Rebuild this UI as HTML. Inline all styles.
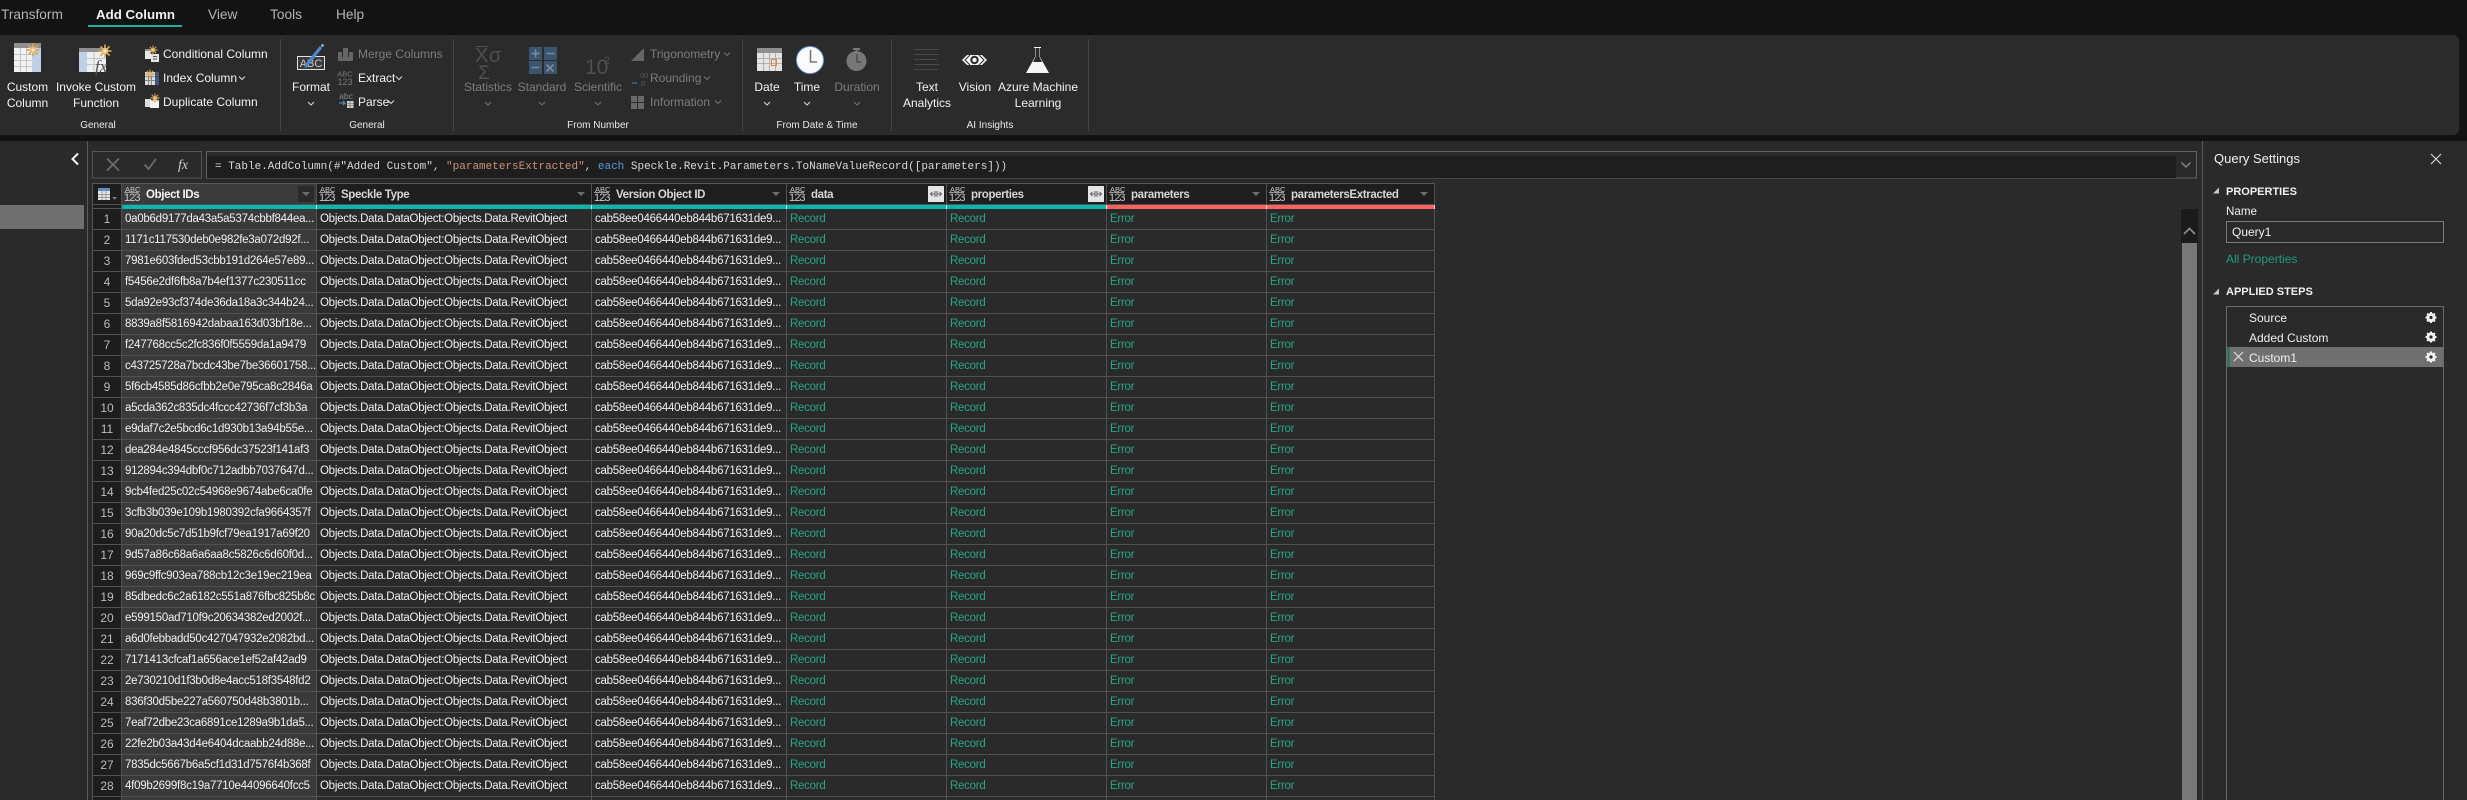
<!DOCTYPE html>
<html><head><meta charset="utf-8"><title>Power Query Editor</title>
<style>
html,body{margin:0;padding:0;width:2467px;height:800px;overflow:hidden;background:#131313;font-family:"Liberation Sans",sans-serif}
#w{position:absolute;left:0;top:0;width:2467px;height:800px;overflow:hidden;contain:strict;background:#131313}
#main{position:absolute;left:0;top:141px;width:2467px;height:659px;background:#2a2a2a;overflow:hidden}
.a{position:absolute}
svg{position:absolute;left:0;top:0;overflow:visible}
svg text{font-family:"Liberation Sans",sans-serif;font-size:12px;fill:#f2f2f2}
.tab{font-size:13.7px;fill:#b4b4b4}
.d{fill:#7c7c7c}
.g{font-size:10px;fill:#e8e8e8}
.m{text-anchor:middle}
.ch{fill:none;stroke:#d8d8d8;stroke-width:1.1}
.cd{fill:none;stroke:#707070;stroke-width:1.1}
#tb{position:absolute;left:93px;top:209px;border-collapse:separate;border-spacing:0;table-layout:fixed;width:1342px}
#tb td,#tb th{height:19px;padding:1px 0 0 3px;box-sizing:content-box;border-right:1px solid #515151;border-bottom:1px solid #515151;font-size:11.5px;letter-spacing:-.26px;font-weight:400;color:#f0f0f0;white-space:nowrap;overflow:hidden;text-align:left;line-height:19px;background:#2a2a2a}
#tb th{background:#1d1d1d;color:#bcbcbc;font-size:12px;letter-spacing:0;text-align:center;padding:1px 0 0}
#tb td:nth-child(2){background:#3a3a3a}
#tb td:nth-child(n+5){color:#28a587}
.h{position:absolute;top:184px;height:20px;background:#1e1e1e;border-right:1px solid #515151;box-sizing:border-box;font-size:11.5px;letter-spacing:-.36px;font-weight:700;color:#d6d6d6;line-height:20px;white-space:nowrap}
.h span{position:absolute;left:24px;top:1px}
.ic{position:absolute;left:2px;top:0;width:16px;height:20px;color:#c8c8c8}
.ic i{position:absolute;left:1px;top:2px;font:normal 7.5px/8px "Liberation Sans",sans-serif;letter-spacing:0}
.ic u{position:absolute;left:0;top:8px;width:15px;height:1px;background:#999}
.ic b{position:absolute;left:0;top:9px;font:normal 11px/11px "Liberation Sans",sans-serif;letter-spacing:-.9px}
.ar{position:absolute;top:8px;width:0;height:0;border-left:4px solid transparent;border-right:4px solid transparent;border-top:4.5px solid #6c6c6c}
.ex{position:absolute;top:2px;width:16px;height:16px;background:#e6e6e6}
.bar{position:absolute;top:205px;height:4px}
.tick{position:absolute;top:205px;width:1px;height:4px;background:#e0e0e0}
.q{position:absolute;white-space:nowrap;color:#f0f0f0;line-height:16px}
</style></head><body>
<div id="w">
<svg width="2467" height="135">
<defs>
<g id="st"><path d="M0-6.5V6.5M-6.5 0H6.5M-4.6-4.6 4.6 4.6M-4.6 4.6 4.6-4.6" stroke="#d5a55a" stroke-width="1.7"/><circle r="3.2" fill="#e6c27d"/><circle r="1.4" fill="#f6eedd"/></g>
<g id="sts"><path d="M0-4.5V4.5M-4.5 0H4.5M-3.2-3.2 3.2 3.2M-3.2 3.2 3.2-3.2" stroke="#c89c58" stroke-width="1.2"/><circle r="1.8" fill="#e6c27d"/></g>
</defs>
<rect x="-10" y="35" width="2469" height="100" rx="6" fill="#2b2b2b"/>

<text class="tab" x="1" y="19">Transform</text>
<text class="tab" x="96" y="19" style="font-weight:700;fill:#f0f0f0;font-size:13.3px">Add Column</text>
<rect x="88" y="25" width="94" height="2" fill="#1fae96"/>
<text class="tab" x="208" y="19">View</text>
<text class="tab" x="270" y="19">Tools</text>
<text class="tab" x="336" y="19">Help</text>

<!-- dividers -->
<path d="M280.5 39V131M453.5 39V131M742.5 39V131M891.5 39V131M1088.5 39V131" stroke="#454545"/>

<!-- Custom column -->
<rect x="14" y="43" width="27" height="29" fill="#f2f2f2"/>
<rect x="14" y="43" width="27" height="5" fill="#8f8f8f"/>
<rect x="32" y="48" width="9" height="24" fill="#bcd1e8"/>
<path d="M14 54.5H32M14 60.5H32M14 66.5H32M20.5 48V72M26.5 48V72" stroke="#c4c4c4"/>
<use href="#st" x="33" y="50"/>
<text class="m" x="27.5" y="91">Custom</text><text class="m" x="27.5" y="107">Column</text>

<!-- Invoke custom -->
<rect x="79" y="48" width="27" height="24" fill="#efefef"/>
<rect x="79" y="48" width="27" height="4" fill="#8f8f8f"/>
<rect x="79" y="52" width="8" height="20" fill="#bcd1e8"/>
<path d="M87 58.5H106M87 64.5H106M94 52V72" stroke="#c4c4c4"/>
<use href="#st" x="105" y="51"/>
<text x="95" y="72" style="font:italic 17px 'Liberation Serif',serif;fill:#4c4c4c">fx</text>
<text class="m" x="96" y="91">Invoke Custom</text><text class="m" x="96" y="107">Function</text>

<!-- small left icons -->
<rect x="145" y="49" width="6" height="10" fill="#e8e8e8"/><rect x="145" y="49" width="6" height="2" fill="#8f8f8f"/>
<rect x="151" y="54" width="8" height="8" fill="#e4e4e4"/><path d="M153 56.5H157M153 59H157" stroke="#555"/>
<use href="#sts" x="153" y="50"/>
<text x="163" y="58">Conditional Column</text>

<rect x="145" y="72" width="10" height="13" fill="#dcdcdc"/><path d="M145 76.5H155M145 80.5H155M148.5 72V85M151.5 72V85" stroke="#888"/>
<rect x="155" y="72" width="4" height="13" fill="#3e5876"/>
<use href="#sts" x="150" y="74"/>
<text x="163" y="82">Index Column</text><path class="ch" d="M239 76.5l3 3 3-3"/>

<rect x="145" y="99" width="6" height="8" fill="#dcdcdc"/><rect x="150" y="100" width="9" height="8" fill="#f4f4f4"/>
<use href="#sts" x="155" y="98"/>
<text x="163" y="106">Duplicate Column</text>

<text class="g m" x="98" y="128">General</text>

<!-- Format -->
<rect x="297.5" y="56.5" width="27" height="13" fill="#3b3b3b" stroke="#e2e2e2"/>
<text class="m" x="311" y="67" style="font-size:11px;fill:#c8c8c8">ABC</text>
<path d="M305 67 321 47" stroke="#4a86c8" stroke-width="3.2"/><path d="M321.5 46.5 323.5 44.5" stroke="#7fb0e0" stroke-width="2.5"/>
<text class="m" x="311" y="91">Format</text><path class="ch" d="M308 102l3 3 3-3"/>

<!-- Merge -->
<path d="M338 52h4v9h-4zM349 52h4v9h-4zM343 48h5v8l2 5h-9l2-5z" fill="#666"/>
<text class="d" x="358" y="58">Merge Columns</text>
<text x="345" y="76.5" class="m" style="font-size:7.5px;fill:#777">ABC</text>
<text x="345" y="85" class="m" style="font-size:9px;fill:#777">123</text>
<text x="358" y="82">Extract</text><path class="ch" d="M396 76.5l3 3 3-3"/>
<text x="346" y="99" class="m" style="font-size:8.5px;fill:#8a8a8a">abc</text>
<path d="M339 103h6l-2-2M345 103l-2 2" stroke="#4a86c8" fill="none" stroke-width="1.3"/>
<rect x="347" y="101" width="6.5" height="7" fill="#cfcfcf"/><path d="M347 103.5H353.5M347 105.5H353.5M350 101V108" stroke="#666" stroke-width=".6"/>
<text x="358" y="106">Parse</text><path class="ch" d="M388 100.5l3 3 3-3"/>
<text class="g m" x="367" y="128">General</text>

<!-- Statistics -->
<text x="475" y="62" style="font-size:20px;fill:#4f4f4f">X</text>
<path d="M476 46.5H488" stroke="#4f4f4f"/>
<text x="489" y="62" style="font-size:20px;fill:#4f4f4f">σ</text>
<text class="m" x="484" y="79" style="font-size:19px;fill:#4f4f4f">Σ</text>
<text class="d m" x="488" y="91">Statistics</text><path class="cd" d="M485 102l3 3 3-3"/>

<!-- Standard -->
<g fill="#3b5470"><rect x="529" y="47" width="13" height="13"/><rect x="544" y="47" width="13" height="13"/><rect x="529" y="61" width="13" height="13"/><rect x="544" y="61" width="13" height="13"/></g>
<path d="M531.5 53.5H539.5M535.5 49.5V57.5M546.5 53.5H554.5M531.5 67.5H539.5M546.5 64.5l7 7M553.5 64.5l-7 7" stroke="#7d8a9a" stroke-width="1.6"/>
<text class="d m" x="542" y="91">Standard</text><path class="cd" d="M539 102l3 3 3-3"/>

<!-- Scientific -->
<text x="585" y="74" style="font-size:21px;fill:#4f4f4f">10</text><text x="604" y="64" style="font-size:11px;fill:#4f4f4f">2</text>
<text class="d m" x="598" y="91">Scientific</text><path class="cd" d="M595 102l3 3 3-3"/>

<!-- Trig etc -->
<path d="M631 61 644 48V61z" fill="#666"/>
<text class="d" x="650" y="58">Trigonometry</text><path class="cd" d="M724 52.5l3 3 3-3"/>
<text x="638" y="78" style="font-size:7.5px;fill:#5a5a5a">.00</text>
<path d="M632 83h5" stroke="#35587e" stroke-width="2"/><text x="639" y="86" style="font-size:7.5px;fill:#5a5a5a">.0</text>
<text class="d" x="650" y="82">Rounding</text><path class="cd" d="M704 76.5l3 3 3-3"/>
<g fill="#6a6a6a"><rect x="631" y="96" width="6" height="6"/><rect x="638" y="96" width="6" height="6"/><rect x="631" y="103" width="6" height="6"/><rect x="638" y="103" width="6" height="6"/></g>
<text class="d" x="650" y="106">Information</text><path class="cd" d="M715 100.5l3 3 3-3"/>
<text class="g m" x="598" y="128">From Number</text>

<!-- Date -->
<rect x="757" y="48" width="25" height="23" fill="#e4e4e4"/><rect x="757" y="48" width="25" height="5" fill="#8f8f8f"/>
<path d="M757 58.5H782M757 63.5H782M763.5 53V71M769.5 53V71M775.5 53V71" stroke="#b0b0b0"/>
<rect x="771.5" y="59.5" width="5" height="6" fill="none" stroke="#e08a3c"/>
<text class="m" x="767" y="91">Date</text><path class="ch" d="M764 102l3 3 3-3"/>

<!-- Time -->
<circle cx="810" cy="60" r="13.5" fill="#fbfbfb" stroke="#6f9ad0" stroke-width="1"/>
<path d="M810.5 50V62H817" fill="none" stroke="#777" stroke-width="1.6"/>
<text class="m" x="807" y="91">Time</text><path class="ch" d="M804 102l3 3 3-3"/>

<!-- Duration -->
<circle cx="856.5" cy="61" r="10" fill="#777"/><rect x="853" y="48" width="7" height="2" fill="#777"/><rect x="855.5" y="49" width="2" height="3" fill="#777"/>
<path d="M857 54V62H861" fill="none" stroke="#444" stroke-width="1.2"/>
<text class="d m" x="857" y="91">Duration</text><path class="cd" d="M854 102l3 3 3-3"/>
<text class="g m" x="817" y="128">From Date &amp; Time</text>

<!-- Text Analytics -->
<path d="M914 49.5H939M914 54.5H939M914 59.5H937M914 64.5H940M914 69.5H938" stroke="#484848"/>
<text class="m" x="927" y="91">Text</text><text class="m" x="927" y="107">Analytics</text>

<!-- Vision -->
<path d="M962 60l5-5h15l5 5-5 5h-15z" fill="#f4f4f4"/>
<circle cx="974.5" cy="60" r="4.2" fill="#2b2b2b"/><circle cx="974.5" cy="60" r="2.2" fill="#f4f4f4"/>
<path d="M970 55l-5 5 5 5" stroke="#2b2b2b" stroke-width="1" fill="none"/><path d="M979 55l5 5-5 5" stroke="#2b2b2b" stroke-width="1" fill="none"/>
<text class="m" x="975" y="91">Vision</text>

<!-- Azure ML -->
<path d="M1034 47h7v1h-1v9l9 16h-23l9-16v-9h-1z" fill="#f6f6f6"/>
<path d="M1035.5 48h4v9l2.5 5h-9l2.5-5z" fill="#2b2b2b"/>
<text class="m" x="1038" y="91">Azure Machine</text><text class="m" x="1038" y="107">Learning</text>
<text class="g m" x="990" y="128">AI Insights</text>
</svg>

<div id="main"></div>

<!-- left pane -->
<div class="a" style="left:87px;top:141px;width:1px;height:659px;background:#5a5a5a"></div>
<div class="a" style="left:0;top:205px;width:84px;height:24px;background:#6f6f6f"></div>
<svg width="2467" height="800">
<path d="M78 153.5l-5.5 5.5 5.5 5.5" fill="none" stroke="#f4f4f4" stroke-width="2"/>
<!-- formula bar -->
<rect x="92.5" y="151.5" width="109" height="26.5" fill="#2a2a2a" stroke="#565656"/>
<path d="M107 158.5l12 12M119 158.5l-12 12" stroke="#6c6c6c" stroke-width="1.8"/>
<path d="M144.5 164.5l4 4.5 7.5-10" fill="none" stroke="#6c6c6c" stroke-width="1.8"/>
<text x="178" y="169" style="font:italic 14px 'Liberation Serif',serif;fill:#d0d0d0">fx</text>
<rect x="206.5" y="151.5" width="1990" height="26.5" fill="#2a2a2a" stroke="#626262"/>
<rect x="207" y="156" width="1969" height="22" fill="#1e1e1e"/>
<path d="M2181.5 162.5l4.5 4.5 4.5-4.5" fill="none" stroke="#7a7a7a" stroke-width="1.6"/>
<text x="215" y="169" style="font:11px 'Liberation Mono',monospace;fill:#d8d8d8;white-space:pre">= Table.AddColumn(#"Added Custom", <tspan style="fill:#ce9178">"parametersExtracted"</tspan>, <tspan style="fill:#569cd6">each</tspan> Speckle.Revit.Parameters.ToNameValueRecord([parameters]))</text>
</svg>

<!-- header -->
<div class="a" style="left:93px;top:183px;width:1342px;height:1px;background:#575757"></div>
<div class="a" style="left:93px;top:184px;width:29px;height:25px;background:#1d1d1d"></div>
<div class="a" style="left:92px;top:183px;width:1px;height:617px;background:#515151"></div>
<div class="a" style="left:121px;top:184px;width:1px;height:25px;background:#515151"></div>
<div class="a" style="left:93px;top:204px;width:1342px;height:1px;background:#515151"></div>
<div class="a" style="left:93px;top:208px;width:29px;height:1px;background:#515151"></div>
<svg width="2467" height="800"><rect x="98" y="188" width="12" height="12" fill="#e4e4e4"/><rect x="98" y="188" width="12" height="3" fill="#5b8fc4"/><path d="M98 194.5H110M98 197.5H110M102 191V200M106 191V200" stroke="#8a8a8a" stroke-width=".8"/><path d="M112 197h5l-2.5 3z" fill="#777"/></svg>

<div class="h" style="left:122px;width:195px;background:#3b3b3b;color:#f6f6f6"><div class="ic"><i>ABC</i><u></u><b>123</b></div><span>Object IDs</span><div class="a" style="left:176px;top:2px;width:16px;height:16px;background:#2a2a2a"></div><div class="ar" style="left:180px"></div></div>
<div class="h" style="left:317px;width:275px"><div class="ic"><i>ABC</i><u></u><b>123</b></div><span>Speckle Type</span><div class="ar" style="left:260px"></div></div>
<div class="h" style="left:592px;width:195px"><div class="ic"><i>ABC</i><u></u><b>123</b></div><span>Version Object ID</span><div class="ar" style="left:180px"></div></div>
<div class="h" style="left:787px;width:160px"><div class="ic"><i>ABC</i><u></u><b>123</b></div><span>data</span><div class="ex" style="left:141px"><svg width="16" height="16"><path d="M7 8H2.5M4.5 6 2.5 8l2 2M9 8h4.5M11.5 6l2 2-2 2M7 5v6M9 5v6" fill="none" stroke="#666" stroke-width="1.1"/></svg></div></div>
<div class="h" style="left:947px;width:160px"><div class="ic"><i>ABC</i><u></u><b>123</b></div><span>properties</span><div class="ex" style="left:141px"><svg width="16" height="16"><path d="M7 8H2.5M4.5 6 2.5 8l2 2M9 8h4.5M11.5 6l2 2-2 2M7 5v6M9 5v6" fill="none" stroke="#666" stroke-width="1.1"/></svg></div></div>
<div class="h" style="left:1107px;width:160px"><div class="ic"><i>ABC</i><u></u><b>123</b></div><span>parameters</span><div class="ar" style="left:145px"></div></div>
<div class="h" style="left:1267px;width:168px"><div class="ic"><i>ABC</i><u></u><b>123</b></div><span>parametersExtracted</span><div class="ar" style="left:153px"></div></div>
<div class="bar" style="left:122px;width:985px;background:#01b8aa"></div>
<div class="bar" style="left:1107px;width:328px;background:#fd625e"></div>
<div class="tick" style="left:316px"></div><div class="tick" style="left:591px"></div><div class="tick" style="left:786px"></div><div class="tick" style="left:946px"></div><div class="tick" style="left:1106px"></div><div class="tick" style="left:1266px"></div><div class="tick" style="left:1434px"></div>

<table id="tb"><colgroup><col style="width:29px"><col style="width:195px"><col style="width:275px"><col style="width:195px"><col style="width:160px"><col style="width:160px"><col style="width:160px"><col style="width:168px"></colgroup>
<tr><th>1<td>0a0b6d9177da43a5a5374cbbf844ea...<td>Objects.Data.DataObject:Objects.Data.RevitObject<td>cab58ee0466440eb844b671631de9...<td>Record<td>Record<td>Error<td>Error
<tr><th>2<td>1171c117530deb0e982fe3a072d92f...<td>Objects.Data.DataObject:Objects.Data.RevitObject<td>cab58ee0466440eb844b671631de9...<td>Record<td>Record<td>Error<td>Error
<tr><th>3<td>7981e603fded53cbb191d264e57e89...<td>Objects.Data.DataObject:Objects.Data.RevitObject<td>cab58ee0466440eb844b671631de9...<td>Record<td>Record<td>Error<td>Error
<tr><th>4<td>f5456e2df6fb8a7b4ef1377c230511cc<td>Objects.Data.DataObject:Objects.Data.RevitObject<td>cab58ee0466440eb844b671631de9...<td>Record<td>Record<td>Error<td>Error
<tr><th>5<td>5da92e93cf374de36da18a3c344b24...<td>Objects.Data.DataObject:Objects.Data.RevitObject<td>cab58ee0466440eb844b671631de9...<td>Record<td>Record<td>Error<td>Error
<tr><th>6<td>8839a8f5816942dabaa163d03bf18e...<td>Objects.Data.DataObject:Objects.Data.RevitObject<td>cab58ee0466440eb844b671631de9...<td>Record<td>Record<td>Error<td>Error
<tr><th>7<td>f247768cc5c2fc836f0f5559da1a9479<td>Objects.Data.DataObject:Objects.Data.RevitObject<td>cab58ee0466440eb844b671631de9...<td>Record<td>Record<td>Error<td>Error
<tr><th>8<td>c43725728a7bcdc43be7be36601758...<td>Objects.Data.DataObject:Objects.Data.RevitObject<td>cab58ee0466440eb844b671631de9...<td>Record<td>Record<td>Error<td>Error
<tr><th>9<td>5f6cb4585d86cfbb2e0e795ca8c2846a<td>Objects.Data.DataObject:Objects.Data.RevitObject<td>cab58ee0466440eb844b671631de9...<td>Record<td>Record<td>Error<td>Error
<tr><th>10<td>a5cda362c835dc4fccc42736f7cf3b3a<td>Objects.Data.DataObject:Objects.Data.RevitObject<td>cab58ee0466440eb844b671631de9...<td>Record<td>Record<td>Error<td>Error
<tr><th>11<td>e9daf7c2e5bcd6c1d930b13a94b55e...<td>Objects.Data.DataObject:Objects.Data.RevitObject<td>cab58ee0466440eb844b671631de9...<td>Record<td>Record<td>Error<td>Error
<tr><th>12<td>dea284e4845cccf956dc37523f141af3<td>Objects.Data.DataObject:Objects.Data.RevitObject<td>cab58ee0466440eb844b671631de9...<td>Record<td>Record<td>Error<td>Error
<tr><th>13<td>912894c394dbf0c712adbb7037647d...<td>Objects.Data.DataObject:Objects.Data.RevitObject<td>cab58ee0466440eb844b671631de9...<td>Record<td>Record<td>Error<td>Error
<tr><th>14<td>9cb4fed25c02c54968e9674abe6ca0fe<td>Objects.Data.DataObject:Objects.Data.RevitObject<td>cab58ee0466440eb844b671631de9...<td>Record<td>Record<td>Error<td>Error
<tr><th>15<td>3cfb3b039e109b1980392cfa9664357f<td>Objects.Data.DataObject:Objects.Data.RevitObject<td>cab58ee0466440eb844b671631de9...<td>Record<td>Record<td>Error<td>Error
<tr><th>16<td>90a20dc5c7d51b9fcf79ea1917a69f20<td>Objects.Data.DataObject:Objects.Data.RevitObject<td>cab58ee0466440eb844b671631de9...<td>Record<td>Record<td>Error<td>Error
<tr><th>17<td>9d57a86c68a6a6aa8c5826c6d60f0d...<td>Objects.Data.DataObject:Objects.Data.RevitObject<td>cab58ee0466440eb844b671631de9...<td>Record<td>Record<td>Error<td>Error
<tr><th>18<td>969c9ffc903ea788cb12c3e19ec219ea<td>Objects.Data.DataObject:Objects.Data.RevitObject<td>cab58ee0466440eb844b671631de9...<td>Record<td>Record<td>Error<td>Error
<tr><th>19<td>85dbedc6c2a6182c551a876fbc825b8c<td>Objects.Data.DataObject:Objects.Data.RevitObject<td>cab58ee0466440eb844b671631de9...<td>Record<td>Record<td>Error<td>Error
<tr><th>20<td>e599150ad710f9c20634382ed2002f...<td>Objects.Data.DataObject:Objects.Data.RevitObject<td>cab58ee0466440eb844b671631de9...<td>Record<td>Record<td>Error<td>Error
<tr><th>21<td>a6d0febbadd50c427047932e2082bd...<td>Objects.Data.DataObject:Objects.Data.RevitObject<td>cab58ee0466440eb844b671631de9...<td>Record<td>Record<td>Error<td>Error
<tr><th>22<td>7171413cfcaf1a656ace1ef52af42ad9<td>Objects.Data.DataObject:Objects.Data.RevitObject<td>cab58ee0466440eb844b671631de9...<td>Record<td>Record<td>Error<td>Error
<tr><th>23<td>2e730210d1f3b0d8e4acc518f3548fd2<td>Objects.Data.DataObject:Objects.Data.RevitObject<td>cab58ee0466440eb844b671631de9...<td>Record<td>Record<td>Error<td>Error
<tr><th>24<td>836f30d5be227a560750d48b3801b...<td>Objects.Data.DataObject:Objects.Data.RevitObject<td>cab58ee0466440eb844b671631de9...<td>Record<td>Record<td>Error<td>Error
<tr><th>25<td>7eaf72dbe23ca6891ce1289a9b1da5...<td>Objects.Data.DataObject:Objects.Data.RevitObject<td>cab58ee0466440eb844b671631de9...<td>Record<td>Record<td>Error<td>Error
<tr><th>26<td>22fe2b03a43d4e6404dcaabb24d88e...<td>Objects.Data.DataObject:Objects.Data.RevitObject<td>cab58ee0466440eb844b671631de9...<td>Record<td>Record<td>Error<td>Error
<tr><th>27<td>7835dc5667b6a5cf1d31d7576f4b368f<td>Objects.Data.DataObject:Objects.Data.RevitObject<td>cab58ee0466440eb844b671631de9...<td>Record<td>Record<td>Error<td>Error
<tr><th>28<td>4f09b2699f8c19a7710e44096640fcc5<td>Objects.Data.DataObject:Objects.Data.RevitObject<td>cab58ee0466440eb844b671631de9...<td>Record<td>Record<td>Error<td>Error
<tr><th>&nbsp;<td>&nbsp;<td>&nbsp;<td>&nbsp;<td>&nbsp;<td>&nbsp;<td>&nbsp;<td>&nbsp;
</table>

<!-- scrollbar -->
<div class="a" style="left:2181px;top:209px;width:17px;height:34px;background:#1b1b1b"></div>
<div class="a" style="left:2182px;top:243px;width:15px;height:557px;background:#787878"></div>
<svg width="2467" height="800"><path d="M2184 234l5.5-5.5 5.5 5.5" fill="none" stroke="#8a8a8a" stroke-width="1.8"/></svg>

<!-- Query settings -->
<div class="a" style="left:2202px;top:141px;width:1px;height:659px;background:#5a5a5a"></div>
<div class="q" style="left:2214px;top:151px;font-size:13px">Query Settings</div>
<svg width="2467" height="800">
<path d="M2431 154l10 10M2441 154l-10 10" stroke="#d8d8d8" stroke-width="1.2"/>
<path d="M2213 193.5h6v-6z" fill="#c8c8c8"/>
<path d="M2213 294.5h6v-6z" fill="#c8c8c8"/>
<rect x="2226.5" y="221.5" width="217" height="21" fill="none" stroke="#7a7a7a"/>
<rect x="2226.5" y="306.5" width="217" height="500" fill="none" stroke="#6a6a6a"/>
<rect x="2227" y="347" width="216" height="20" fill="#707070"/>
<rect x="2227.5" y="347" width="2" height="20" fill="#17755f"/>
<path d="M2234 352l9 9M2243 352l-9 9" stroke="#e0e0e0" stroke-width="1.2"/>
<defs><g id="gr"><circle r="3.4" fill="none" stroke="#f0f0f0" stroke-width="2.4"/><path d="M0-5.5V5.5M-5.5 0H5.5M-3.9-3.9 3.9 3.9M-3.9 3.9 3.9-3.9" stroke="#f0f0f0" stroke-width="2"/><circle r="1.6" fill="#2a2a2a"/></g></defs>
<use href="#gr" x="2431" y="317.5"/><use href="#gr" x="2431" y="337"/><use href="#gr" x="2431" y="357"/>
</svg>
<div class="q" style="left:2226px;top:184px;font-size:11px;font-weight:700">PROPERTIES</div>
<div class="q" style="left:2226px;top:204px;font-size:11.6px">Name</div>
<div class="q" style="left:2232px;top:224px;font-size:12px">Query1</div>
<div class="q" style="left:2226px;top:251px;font-size:12px;color:#229b80">All Properties</div>
<div class="q" style="left:2226px;top:284px;font-size:11px;font-weight:700">APPLIED STEPS</div>
<div class="q" style="left:2249px;top:310px;font-size:12px">Source</div>
<div class="q" style="left:2249px;top:330px;font-size:12px">Added Custom</div>
<div class="q" style="left:2249px;top:350px;font-size:12px">Custom1</div>
</div>
</body></html>
